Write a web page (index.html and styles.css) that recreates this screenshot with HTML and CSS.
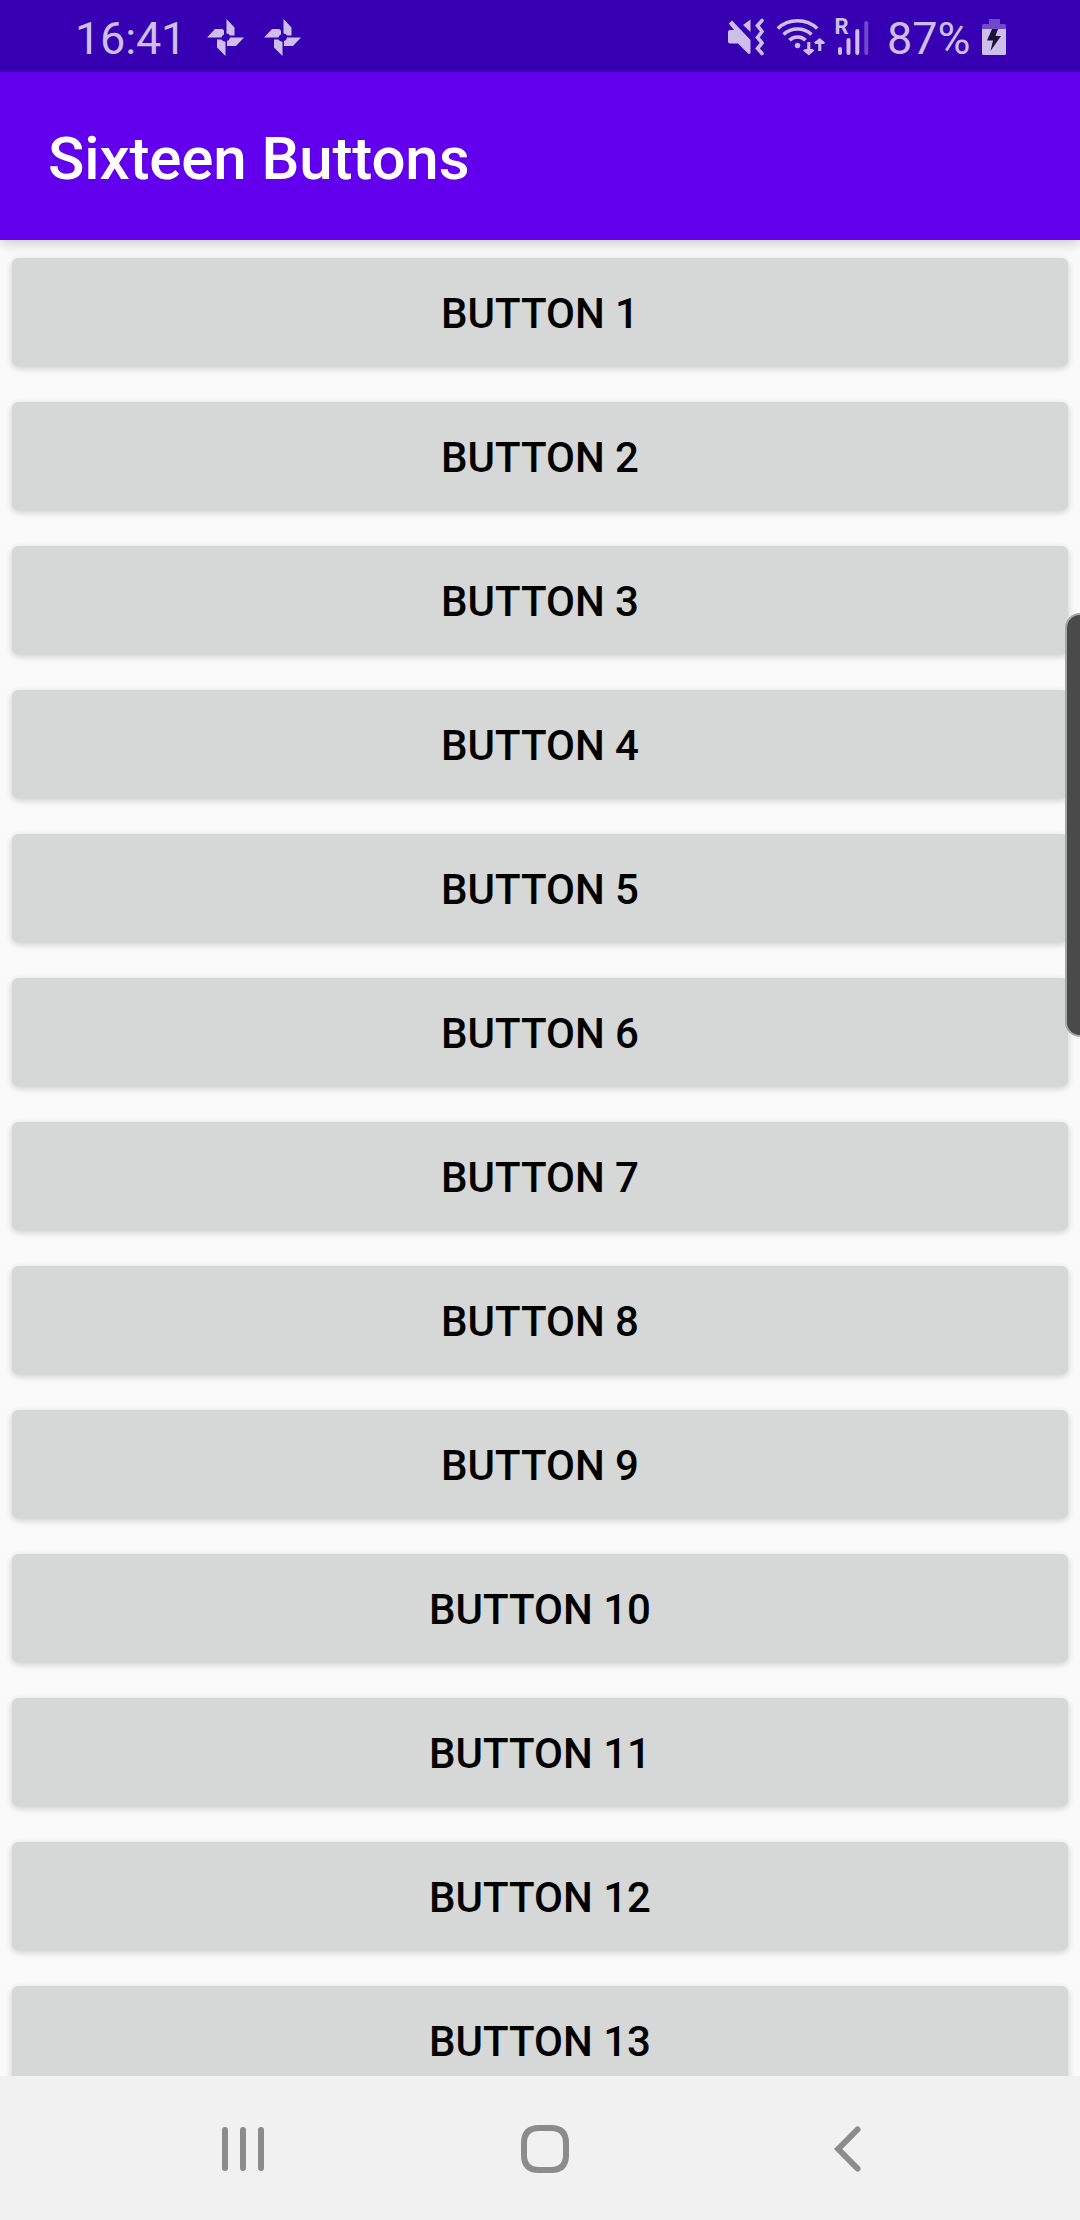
FILE: index.html
```html
<!DOCTYPE html>
<html lang="en">
<head>
<meta charset="utf-8">
<title>Sixteen Buttons</title>
<link rel="stylesheet" href="styles.css">
</head>
<body>
<div class="screen">
  <div class="status">
    <span class="time">16:41</span>
    <svg class="fan" width="38" height="38" viewBox="0 0 38 38"><path id="petals" d="M19.500 0L27.500 8.500V16.500H23Q22 14.500 19.500 14.500ZM0 18.500L8 10H14.500Q17 10 17 12.500V15.500Q14.800 16.500 14.500 18.500ZM18.500 37L10 28.500V20.500H14.500Q15.500 22.500 18.500 22.800ZM37 18.500L29 27H20V22Q22.800 21 23 18.500Z"/></svg>
    <svg class="fan" width="38" height="38" viewBox="0 0 38 38"><use href="#petals"/></svg>
    <div class="indicators">
      <svg width="38" height="72" viewBox="726 0 38 72">
        <path d="M750.500 19.500V32L743 25ZM730 30H734L728.800 23.500L732 20.500L750.500 40V52Q750.500 55 748 53.500L738 43.500H730Q728 43.500 728 41.500V32Q728 30 730 30Z"/>
        <path class="line" d="M762 20.500L757.500 25.500L762 31.500L757.500 37.500L762 43L757.500 48.500L762 53.500" stroke-width="3.600"/>
      </svg>
      <svg width="49" height="72" viewBox="776 0 49 72">
        <g class="line wifi" stroke-width="3.600"><path d="M777.800 28.500Q786 20.800 797.500 20.800T817.200 28.500"/><path d="M783.500 34.500Q789.500 29 797.500 29T811.500 34.500"/><path d="M789.500 40.300Q792.500 37 797.500 37T805.500 40.300"/></g>
        <circle cx="797.500" cy="45.500" r="2.700"/>
        <path d="M807.200 42H810.300V49H812.500L814.500 50.500L808.800 55.500L803 50.500L805 49H807.200ZM818.200 51H821.300V44H824L825 42.500L819.700 38L814 42.500L815.500 44H818.200Z"/>
      </svg>
      <svg class="signal" width="35" height="72" viewBox="835 0 35 72">
        <text class="roaming" x="834.500" y="34">R</text>
        <path class="line" d="M840 49V53M848.500 40V53M857.300 31V53" stroke-width="4"/>
        <path class="line faint" d="M866.300 23V53" stroke-width="4"/>
      </svg>
      <span class="percent">87%</span>
      <svg width="24" height="72" viewBox="982 0 24 72">
        <path class="faint-fill" d="M989 19H1000V24H1004.500Q1006 24 1006 25.500V29H982V25.500Q982 24 983.500 24H989Z"/>
        <path d="M982 29H1006V53.500Q1006 55 1004.500 55H983.500Q982 55 982 53.500Z"/>
        <path class="bolt" d="M992 29H998L995.500 36H1001L990.500 51L993 40.500H987Z"/>
      </svg>
    </div>
  </div>
  <header class="appbar"><h1>Sixteen Buttons</h1></header>
  <main class="list">
    <button>Button 1</button>
    <button>Button 2</button>
    <button>Button 3</button>
    <button>Button 4</button>
    <button>Button 5</button>
    <button>Button 6</button>
    <button>Button 7</button>
    <button>Button 8</button>
    <button>Button 9</button>
    <button>Button 10</button>
    <button>Button 11</button>
    <button>Button 12</button>
    <button>Button 13</button>
  </main>
  <nav class="navbar">
    <svg width="60" height="60" viewBox="0 0 60 60"><path d="M12 12V50M30 12V50M48 12V50"/></svg>
    <svg width="60" height="60" viewBox="0 0 60 60"><path d="M24 10H36Q51 10 51 25V37Q51 52 36 52H24Q9 52 9 37V25Q9 10 24 10Z"/></svg>
    <svg width="60" height="60" viewBox="0 0 60 60"><path d="M40.500 11.500L21.200 31L40.500 50.500"/></svg>
  </nav>
  <div class="edge-handle"></div>
</div>
</body>
</html>
```
FILE: styles.css
```css
body {
  margin: 0;
  font-family: Roboto, sans-serif;
}

.screen {
  position: relative;
  width: 1080px;
  height: 2220px;
  display: flex;
  flex-direction: column;
  overflow: hidden;
  background: #fafafa;
}

.status {
  z-index: 1;
  flex: none;
  box-sizing: border-box;
  height: 72px;
  padding: 0 74px 0 75px;
  display: flex;
  align-items: center;
  background: #3700b3;
  color: #cdbfec;
  fill: #cdbfec;
  font-size: 45px;
}

.time,
.percent {
  padding-top: 4px;
}

.time {
  width: 132px;
  letter-spacing: -0.2px;
}

.fan {
  margin: 3px 19px 0 0;
}

.indicators {
  margin-left: auto;
  display: flex;
  align-items: center;
}

.indicators svg {
  flex: none;
}

.indicators svg + svg {
  margin-left: 12px;
}

.indicators svg + .signal {
  margin-left: 10px;
}

.line {
  fill: none;
  stroke: #cdbfec;
  stroke-linecap: round;
}

.wifi {
  stroke-linecap: butt;
}

.roaming {
  font-size: 22px;
  font-weight: 700;
}

.faint {
  stroke: #7249c9;
}

.faint-fill {
  fill: #7249c9;
}

.bolt {
  fill: #1c1038;
}

.percent {
  width: 95px;
  margin-left: 17px;
}

.appbar {
  flex: none;
  height: 168px;
  display: flex;
  align-items: center;
  padding-left: 48px;
  background: #6200ee;
  box-shadow: 0 3px 12px rgba(0, 0, 0, 0.2);
}

.appbar h1 {
  margin: 0;
  padding-top: 4px;
  color: #fff;
  font-size: 60px;
  font-weight: 500;
  letter-spacing: -0.12px;
}

.list {
  flex: 1;
  min-height: 0;
  padding: 18px 12px 0;
  display: flex;
  flex-direction: column;
  gap: 36px;
  overflow: hidden;
}

.list button {
  flex: none;
  height: 108px;
  padding: 2px 0 0;
  border: 0;
  border-radius: 6px;
  background: #d6d8d7;
  box-shadow: 0 2px 7px rgba(0, 0, 0, 0.2);
  color: #000;
  font: 500 42px Roboto, sans-serif;
  text-transform: uppercase;
}

.navbar {
  flex: none;
  height: 144px;
  display: flex;
  align-items: center;
  justify-content: center;
  gap: 242px;
  padding-left: 10px;
  box-sizing: border-box;
  background: #f1f1f1;
}

.navbar path {
  fill: none;
  stroke: #8c8c8c;
  stroke-width: 6;
  stroke-linecap: round;
}

.edge-handle {
  position: absolute;
  top: 613px;
  right: 0;
  box-sizing: border-box;
  width: 15px;
  height: 424px;
  border: 2px solid #a4a6a5;
  border-right: 0;
  border-radius: 16px 0 0 16px;
  background: #4a4a4a;
}
```
